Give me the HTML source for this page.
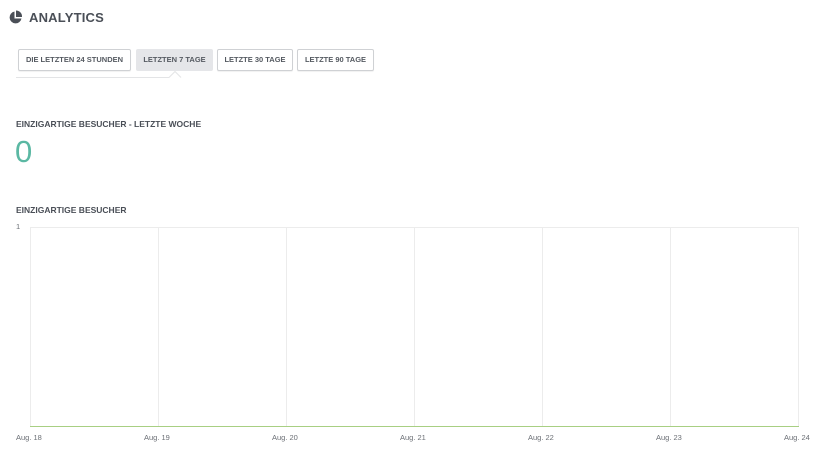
<!DOCTYPE html>
<html><head><meta charset="utf-8"><style>
body{margin:0;width:828px;height:452px;background:#fff;font-family:"Liberation Sans",sans-serif;color:#4a4f57;position:relative;overflow:hidden}
.a{position:absolute}
.btn{position:absolute;top:49px;height:20px;border:1px solid #cfd1d4;border-radius:2px;background:#fff;font-size:7.5px;font-weight:bold;color:#555a61;text-align:center;line-height:20px;box-sizing:content-box;box-shadow:0 1px 1px rgba(0,0,0,.06)}
.lbl{font-size:8.5px;font-weight:bold;color:#4a4f57}
.vl{position:absolute;top:227px;height:200px;width:1px;background:#ececec}
.x{position:absolute;top:433px;font-size:7.5px;color:#6b6f75}
</style></head><body>
<svg class="a" style="left:8px;top:10px" width="15" height="15" viewBox="0 0 15 15"><path d="M6.5 1.5A6 6 0 1 0 13.5 8.5H6.5Z" fill="#4a4f57"/><path d="M8 0.5A6 6 0 0 1 14 7H8Z" fill="#4a4f57"/></svg>
<div class="a" style="left:29px;top:10px;font-size:13px;font-weight:bold;color:#4a4f57;letter-spacing:.2px">ANALYTICS</div>
<div class="btn" style="left:18px;width:111px">DIE LETZTEN 24 STUNDEN</div>
<div class="btn" style="left:136px;width:75px;background:#e5e6e9;border-color:#e5e6e9;box-shadow:none">LETZTEN 7 TAGE</div>
<div class="btn" style="left:217px;width:74px">LETZTE 30 TAGE</div>
<div class="btn" style="left:297px;width:75px">LETZTE 90 TAGE</div>
<svg class="a" style="left:16px;top:70px" width="170" height="10"><path d="M0 7.5H153L159 1.5L165 7.5" fill="none" stroke="#e3e4e6" stroke-width="1"/></svg>
<div class="a lbl" style="left:16px;top:119px">EINZIGARTIGE BESUCHER - LETZTE WOCHE</div>
<div class="a" style="left:15px;top:134px;font-size:31px;color:#5bb8a3">0</div>
<div class="a lbl" style="left:16px;top:205px">EINZIGARTIGE BESUCHER</div>
<div class="a" style="left:16px;top:222px;font-size:7.5px;color:#6b6f75">1</div>
<div class="a" style="left:30px;top:227px;width:768px;height:1px;background:#ececec"></div>
<div class="vl" style="left:30px"></div><div class="vl" style="left:158px"></div><div class="vl" style="left:286px"></div><div class="vl" style="left:414px"></div><div class="vl" style="left:542px"></div><div class="vl" style="left:670px"></div><div class="vl" style="left:798px"></div>
<div class="a" style="left:30px;top:426px;width:769px;height:1px;background:#a8cf83"></div>
<div class="x" style="left:16px">Aug. 18</div>
<div class="x" style="left:144px">Aug. 19</div>
<div class="x" style="left:272px">Aug. 20</div>
<div class="x" style="left:400px">Aug. 21</div>
<div class="x" style="left:528px">Aug. 22</div>
<div class="x" style="left:656px">Aug. 23</div>
<div class="x" style="left:784px">Aug. 24</div>
</body></html>
